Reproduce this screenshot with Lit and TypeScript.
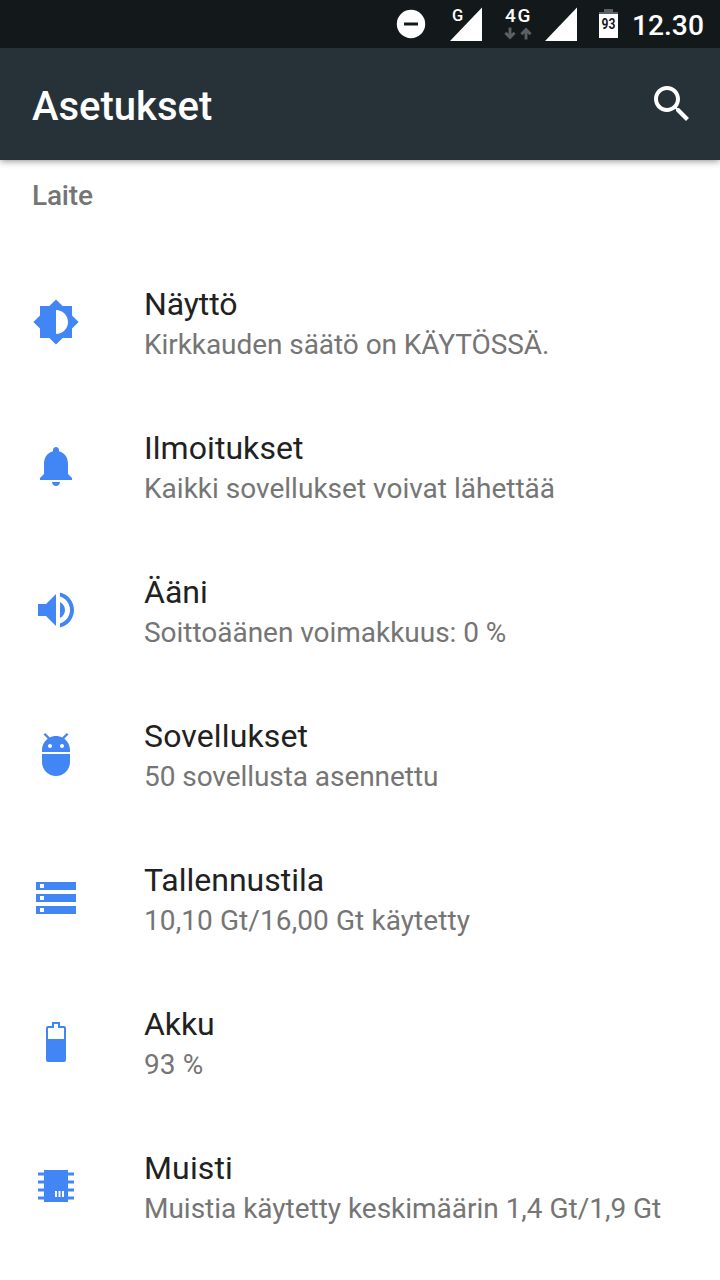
import { LitElement, html, css, svg } from "lit";
import { customElement, property } from "lit/decorators.js";

const icons: Record<string, unknown> = {
  display: svg`<path transform="scale(2)" d="M20 15.31L23.31 12 20 8.69V4h-4.69L12 .69 8.69 4H4v4.69L.69 12 4 15.31V20h4.69L12 23.31 15.31 20H20v-4.69zM12 18V6c3.31 0 6 2.69 6 6s-2.69 6-6 6z"/>`,
  bell: svg`<path transform="scale(2)" d="M12 22c1.1 0 2-.9 2-2h-4c0 1.1.89 2 2 2zm6-6v-5c0-3.07-1.64-5.64-4.5-6.32V4c0-.83-.67-1.5-1.5-1.5s-1.5.67-1.5 1.5v.68C7.63 5.36 6 7.92 6 11v5l-2 2v1h16v-1l-2-2z"/>`,
  sound: svg`<path transform="scale(2)" d="M3 9v6h4l5 5V4L7 9H3zm13.5 3c0-1.77-1.02-3.29-2.5-4.03v8.05c1.48-.73 2.5-2.25 2.5-4.02zM14 3.23v2.06c2.89.86 5 3.54 5 6.71s-2.11 5.85-5 6.71v2.06c4.01-.91 7-4.49 7-8.77s-2.99-7.86-7-8.77z"/>`,
  apps: svg`<path transform="scale(2)" d="M5 16c0 3.87 3.13 7 7 7s7-3.13 7-7v-4H5v4zM16.12 4.37l2.1-2.1-.82-.83-2.3 2.31C14.16 3.28 13.12 3 12 3s-2.16.28-3.09.75L6.6 1.44l-.82.83 2.1 2.1C6.14 5.64 5 7.68 5 10v1h14v-1c0-2.32-1.14-4.36-2.88-5.63zM9 9c-.55 0-1-.45-1-1s.45-1 1-1 1 .45 1 1-.45 1-1 1zm6 0c-.55 0-1-.45-1-1s.45-1 1-1 1 .45 1 1-.45 1-1 1z"/>`,
  storage: svg`<path transform="scale(2)" d="M2 20h20v-4H2v4zm2-3h2v2H4v-2zM2 4v4h20V4H2zm4 3H4V5h2v2zm-4 7h20v-4H2v4zm2-3h2v2H4v-2z"/>`,
  battery: svg`<path fill-rule="evenodd" d="M20 4h8v4h4a2 2 0 0 1 2 2v32a2 2 0 0 1-2 2H16a2 2 0 0 1-2-2V10a2 2 0 0 1 2-2h4zM22 6v4h-6v11h16V10h-6V6z"/>`,
  memory: svg`<path fill-rule="evenodd" d="M12 8h24v32H12zM23 29v6h2v-6zM26.5 29v6h2v-6zM30 29v6h2v-6z"/><path d="M6 10.5h6v3H6zM6 18.5h6v3H6zM6 26.5h6v3H6zM6 34.5h6v3H6zM36 10.5h6v3h-6zM36 18.5h6v3h-6zM36 26.5h6v3h-6zM36 34.5h6v3h-6z"/>`,
};

// icon, heading, summary, heading tracking, summary tracking (px)
const rows: [string, string, string, number, number][] = [
  ["display", "Näyttö", "Kirkkauden säätö on KÄYTÖSSÄ.", -0.1, -0.06],
  ["bell", "Ilmoitukset", "Kaikki sovellukset voivat lähettää", 0.06, 0.01],
  ["sound", "Ääni", "Soittoäänen voimakkuus: 0 %", 0, -0.03],
  ["apps", "Sovellukset", "50 sovellusta asennettu", 0.14, -0.06],
  ["storage", "Tallennustila", "10,10 Gt/16,00 Gt käytetty", 0, 0.09],
  ["battery", "Akku", "93 %", -0.1, 0.1],
  ["memory", "Muisti", "Muistia käytetty keskimäärin 1,4 Gt/1,9 Gt", 0.15, -0.02],
];

@customElement("status-bar")
class StatusBar extends LitElement {
  static styles = css`
    :host { display: block; height: 48px; background: #13181b; }
    svg { display: block; }
    text { font-family: Roboto, sans-serif; font-weight: 500; }
    .level { font-weight: 700; }
  `;
  render() {
    return html`<svg width="720" height="48" viewBox="0 0 720 48" fill="#fff">
      <circle cx="411" cy="24" r="14.2"/>
      <path d="M404 22.5h14v3h-14z" fill="#13181b"/>
      <text x="452" y="21" font-size="16.5">G</text>
      <path d="M450 41L482 7.5V41z"/>
      <text x="505" y="22" font-size="19" letter-spacing="1.6">4G</text>
      <path fill="none" stroke="#5c6062" stroke-width="2.9" d="M510 27.5V37M505.4 32.800L510 37.400 514.600 32.800M526 39.500V30M521.400 34.200L526 29.600 530.600 34.200"/>
      <path d="M545 41L577 7.5V41z"/>
      <path d="M604 9h9v3h5v2h-19v-2h5z" fill="#5c6062"/>
      <path d="M599 14h19v24h-19z"/>
      <text class="level" x="601.6" y="29" font-size="14.5" textLength="13.8" lengthAdjust="spacingAndGlyphs" fill="#13181b">93</text>
      <text x="632" y="35" font-size="28.2">12.30</text>
    </svg>`;
  }
}

@customElement("settings-row")
class SettingsRow extends LitElement {
  @property() icon = "";
  @property() heading = "";
  @property() summary = "";
  @property({ type: Number }) headingTracking = 0;
  @property({ type: Number }) summaryTracking = 0;
  static styles = css`
    :host { display: flex; align-items: center; height: 144px; padding-left: 32px; box-sizing: border-box; }
    .icon { flex: none; width: 48px; height: 48px; margin-right: 64px; fill: #4285f4; }
    .heading { font-size: 32px; line-height: 38px; color: #212121; }
    .summary { font-size: 28px; line-height: 34px; color: #757575; margin-top: 5px; }
    .text { white-space: nowrap; padding-top: 3px; }
  `;
  render() {
    return html`<svg class="icon" viewBox="0 0 48 48">${icons[this.icon]}</svg>
      <div class="text">
        <div class="heading" style="letter-spacing:${this.headingTracking}px">${this.heading}</div>
        <div class="summary" style="letter-spacing:${this.summaryTracking}px">${this.summary}</div>
      </div>`;
  }
}

@customElement("app-root")
class AppRoot extends LitElement {
  static styles = css`
    :host { display: flex; flex-direction: column; width: 720px; height: 1280px; overflow: hidden; background: #fff; font-family: Roboto, sans-serif; }
    status-bar, .bar { flex: none; }
    status-bar { position: relative; z-index: 1; }
    .bar { display: flex; align-items: center; justify-content: space-between; height: 112px; box-sizing: border-box; padding: 0 24px 0 32px; background: #263238; box-shadow: 0 1px 7px rgba(0, 0, 0, 0.45); }
    .title { font-size: 40px; line-height: 48px; font-weight: 500; color: #fff; padding-top: 6px; }
    .search { width: 48px; height: 48px; fill: #fff; }
    .section { flex: none; height: 90px; box-sizing: border-box; padding: 19px 32px 0; font-size: 28px; line-height: 34px; font-weight: 500; letter-spacing: -0.2px; color: #757575; }
    settings-row { flex: none; }
  `;
  render() {
    return html`<status-bar></status-bar>
      <div class="bar">
        <div class="title">Asetukset</div>
        <svg class="search" viewBox="0 0 24 24"><path d="M15.5 14h-.79l-.28-.27C15.41 12.59 16 11.11 16 9.5 16 5.91 13.09 3 9.5 3S3 5.91 3 9.5 5.91 16 9.5 16c1.61 0 3.09-.59 4.23-1.57l.27.28v.79l5 4.99L20.49 19l-4.99-5zm-6 0C7.01 14 5 11.99 5 9.5S7.01 5 9.5 5 14 7.01 14 9.5 11.99 14 9.5 14z"/></svg>
      </div>
      <div class="section">Laite</div>
      ${rows.map(([i, h, s, ht, st]) => html`<settings-row .icon=${i} .heading=${h} .summary=${s} .headingTracking=${ht} .summaryTracking=${st}></settings-row>`)}`;
  }
}
